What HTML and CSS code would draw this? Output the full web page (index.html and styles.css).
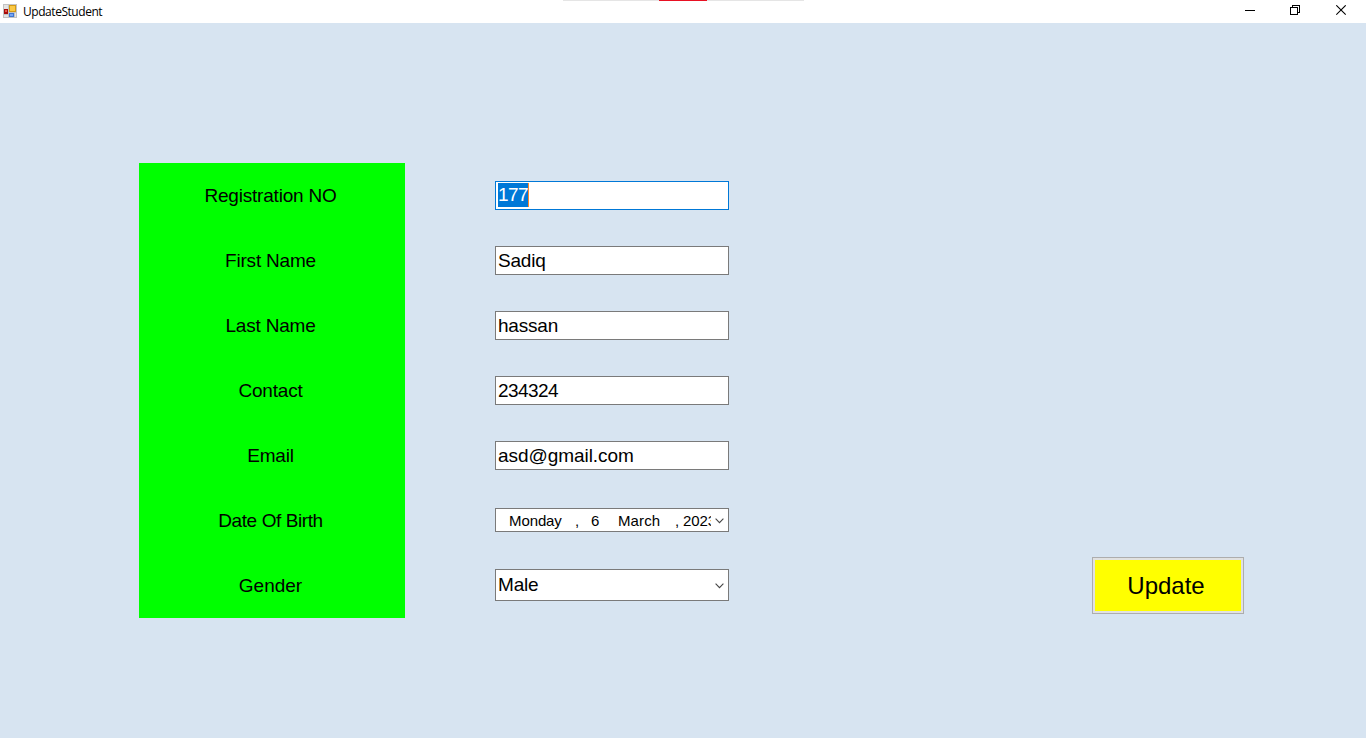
FILE: index.html
```html
<!DOCTYPE html>
<html lang="en">
<head>
<meta charset="utf-8">
<title>UpdateStudent</title>
<link rel="stylesheet" href="styles.css">
</head>
<body>
<div class="window">
  <header class="titlebar">
    <svg class="app-icon" width="14" height="14" viewBox="0 0 14 14" shape-rendering="crispEdges">
      <rect width="14" height="14" fill="#c3c3c3"/>
      <rect x="1" y="1" width="4" height="4" fill="#e3e3e3"/>
      <rect x="1" y="11" width="4" height="2" fill="#e3e3e3"/>
      <rect x="6" y="1" width="7" height="7" fill="#d39a16"/>
      <rect x="7" y="2" width="5" height="5" fill="#fbc945"/>
      <rect x="1" y="5" width="4" height="5" fill="#a80d0a"/>
      <rect x="2" y="6" width="2" height="2" fill="#e8574a"/>
      <rect x="6" y="9" width="5" height="4" fill="#3f75d2"/>
      <rect x="7" y="10" width="3" height="2" fill="#79a6f2"/>
      <rect x="12" y="9" width="1" height="4" fill="#e3e3e3"/>
    </svg>
    <span class="title">UpdateStudent</span>
    <div class="share-strip"><span class="share-mark"></span></div>
    <div class="controls">
      <svg width="11" height="11" viewBox="0 0 11 11" shape-rendering="crispEdges"><path d="M1 5.5H11" stroke="#000"/></svg>
      <svg width="11" height="11" viewBox="0 0 11 11" fill="none" stroke="#000" shape-rendering="crispEdges"><path d="M.5 2.5H7.5V9.5H.5ZM2.5 2V.5H9.5V7.5H8"/></svg>
      <svg width="11" height="11" viewBox="0 0 11 11"><path d="M.3 .3L9.7 9.7M9.7 .3L.3 9.7" stroke="#000" stroke-width="1.1"/></svg>
    </div>
  </header>
  <main class="form">
    <div class="labels">
      <div class="label">Registration NO</div>
      <div class="label">First Name</div>
      <div class="label">Last Name</div>
      <div class="label">Contact</div>
      <div class="label">Email</div>
      <div class="label tight">Date Of Birth</div>
      <div class="label wide">Gender</div>
    </div>
    <div class="fields">
      <div class="field focused"><span class="selection digits">177</span></div>
      <div class="field">Sadiq</div>
      <div class="field">hassan</div>
      <div class="field digits">234324</div>
      <div class="field wide">asd@gmail.com</div>
      <div class="field date">
        <div class="date-text"><span class="weekday">Monday</span><span class="comma">,</span><span class="day">6</span><span class="month">March</span><span class="comma-year">,</span><span class="year">2023</span></div>
        <svg class="chevron" width="9" height="6" viewBox="0 0 9 6"><path d="M.6 .7L4.5 4.6L8.4 .7" fill="none" stroke="#444" stroke-width="1.1"/></svg>
      </div>
      <div class="field combo">
        <span>Male</span>
        <svg class="chevron" width="9" height="6" viewBox="0 0 9 6"><path d="M.6 .7L4.5 4.6L8.4 .7" fill="none" stroke="#444" stroke-width="1.1"/></svg>
      </div>
    </div>
    <button class="update">Update</button>
  </main>
</div>
</body>
</html>
```
FILE: styles.css
```css
* { box-sizing: border-box; }
body { margin: 0; overflow: hidden; }
.window {
  width: 1366px;
  height: 738px;
  display: flex;
  flex-direction: column;
  background: #d7e4f1;
  color: #000;
  font: 19px/24px "Liberation Sans", Arial, sans-serif;
}
.titlebar {
  position: relative;
  height: 23px;
  display: flex;
  align-items: center;
  padding: 0 19px 0 3px;
  background: #fff;
}
.app-icon { margin-top: -1px; }
.title {
  margin-left: 6px;
  font: 12px/20px "Open Sans", "Noto Sans", sans-serif;
  letter-spacing: -0.45px;
}
.share-strip {
  position: absolute;
  top: 0;
  left: 563px;
  width: 241px;
  height: 1px;
  display: flex;
  padding-left: 96px;
  background: #e5e5e5;
}
.share-mark { width: 48px; background: #e81123; }
.controls {
  display: flex;
  gap: 35px;
  margin: -3px 0 0 auto;
}
.controls svg { display: block; }
.form {
  display: grid;
  grid-template-columns: 266px 234px 152px;
  column-gap: 90px;
  padding: 140px 0 0 139px;
}
.labels {
  display: grid;
  grid-auto-rows: 65px;
  background: #0f0;
}
.label {
  display: flex;
  align-items: center;
  justify-content: center;
  padding-right: 3px;
  letter-spacing: -0.2px;
}
.fields {
  display: grid;
  grid-auto-rows: 65px;
  align-items: center;
}
.field {
  height: 29px;
  display: flex;
  align-items: center;
  padding-left: 2px;
  background: #fff;
  border: 1px solid #7a7a7a;
  letter-spacing: -0.2px;
}
.label.tight { letter-spacing: -0.42px; }
.label.wide { letter-spacing: 0; }
.field.wide { letter-spacing: -0.05px; }
.focused { border-color: #0078d7; }
.digits { letter-spacing: -0.57px; }
.selection {
  margin-top: -1px;
  background: #0078d7;
  color: #fff;
  border-right: 1px solid #ff8728;
}
.date {
  height: 24px;
  margin-top: -1px;
  justify-content: space-between;
  padding: 0 4px 0 13px;
  font-size: 15px;
  letter-spacing: -0.1px;
}
.date-text {
  width: 202px;
  display: flex;
  overflow: hidden;
  white-space: nowrap;
  padding-top: 1px;
}
.date-text span { flex: none; }
.date-text .weekday { width: 66px; }
.date-text .comma { width: 16px; }
.date-text .day { width: 27px; }
.date-text .month { width: 57px; letter-spacing: 0.1px; }
.date-text .comma-year { width: 8px; }
.date-text .year { letter-spacing: -0.1px; }
.chevron { position: relative; top: 1px; }
.combo {
  height: 32px;
  margin-top: -1px;
  justify-content: space-between;
  padding-right: 4px;
}
.update {
  width: 152px;
  height: 57px;
  align-self: end;
  margin: 0 0 4px 273px;
  padding: 0 4px 0 0;
  background: #ff0;
  border: 1px solid #adadad;
  box-shadow: inset 0 0 0 2px #e1e1e1;
  color: #000;
  font: 24px/28px "Liberation Sans", Arial, sans-serif;
}
```
